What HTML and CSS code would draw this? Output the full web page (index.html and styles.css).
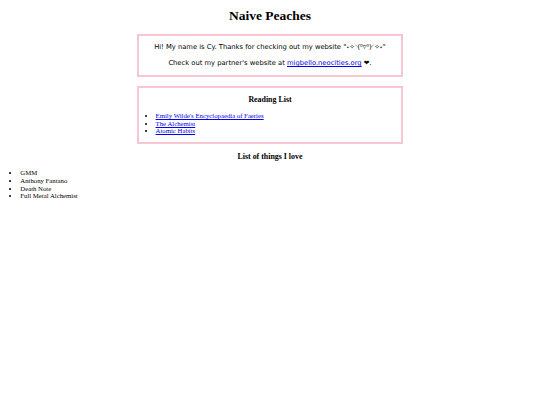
FILE: index.html
```html
<!DOCTYPE html>
<html>
<head>
<meta charset="utf-8">
<title>Naive Peaches</title>
<link rel="stylesheet" href="styles.css">
</head>
<body>
<h1 class="title">Naive Peaches</h1>
<div class="box intro">
<p>Hi! My name is Cy. Thanks for checking out my website °˖✧◝(⁰▿⁰)◜✧˖°</p>
<p>Check out my partner's website at <a href="#">migbello.neocities.org</a> ❤.</p>
</div>
<div class="box reading">
<h3 class="heading">Reading List</h3>
<ul class="list inner">
<li><a href="#">Emily Wilde's Encyclopaedia of Faeries</a></li>
<li><a href="#">The Alchemist</a></li>
<li><a href="#">Atomic Habits</a></li>
</ul>
</div>
<h3 class="heading love">List of things I love</h3>
<ul class="list">
<li>GMM</li>
<li>Anthony Fantano</li>
<li>Death Note</li>
<li>Full Metal Alchemist</li>
</ul>
</body>
</html>
```
FILE: styles.css
```css
html {
  background: #fff;
}
body {
  margin: 0 3.4px;
  font-family: "Liberation Serif", "Times New Roman", serif;
  font-size: 6.75px;
  color: #000;
}
.title {
  text-align: center;
  font-size: 13.5px;
  line-height: 15px;
  margin: 8px 0 11px;
}
.box {
  box-sizing: border-box;
  width: 50%;
  margin: 0 auto;
  border: 2px solid #f7c6d2;
}
.intro {
  text-align: center;
  font-family: "DejaVu Sans", Verdana, sans-serif;
  margin-bottom: 9px;
}
.intro p {
  margin: 7px 0;
  line-height: 9px;
}
.heading {
  text-align: center;
  font-size: 7.9px;
  line-height: 9px;
  margin: 7px 0;
}
.love {
  margin: 8px 0 8px;
}
.list {
  margin: 6px 0;
  padding-left: 16.9px;
}
.list.inner {
  margin: 8px 0 7px;
}
.list li {
  line-height: 7.7px;
}
a {
  color: #0000ee;
}
```
